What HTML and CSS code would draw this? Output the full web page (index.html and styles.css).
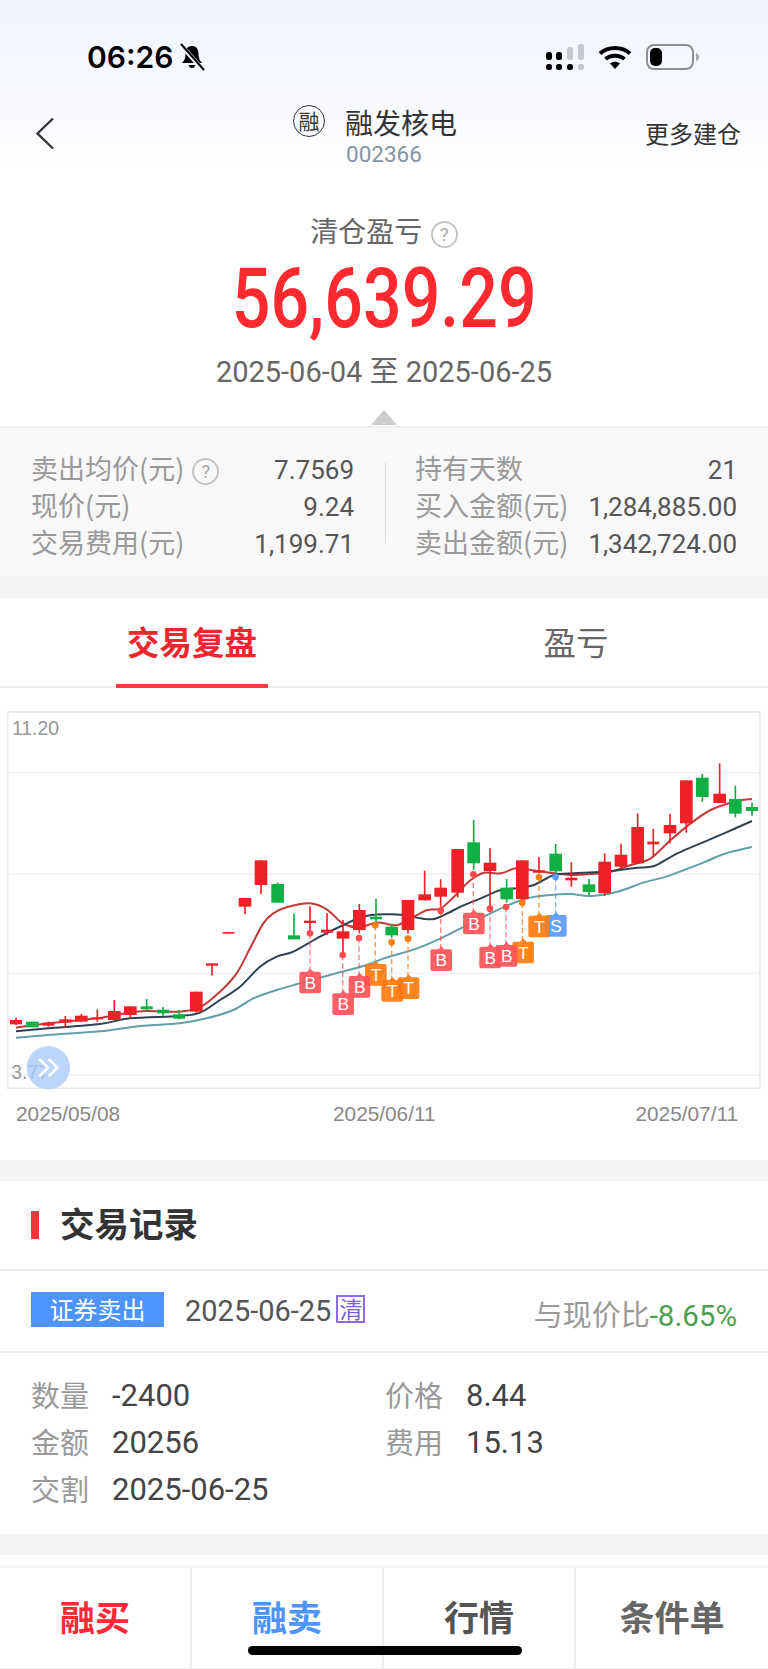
FILE: index.html
```html
<!DOCTYPE html>
<html>
<head>
  <title>融发核电</title>
  <link rel="stylesheet" href="styles.css">
</head>
<body>
  <div class="page">
    <div class="top">
      <div class="status">
        <span class="time">06:26</span>
        <svg class="bell" width="26" height="28" viewBox="0 0 26 28">
          <path d="M13 3c-4.500 0-6.500 3.500-6.500 8 0 4-1 6.500-3.500 9h20c-2.500-2.500-3.500-5-3.500-9 0-4.500-2-8-6.500-8z" fill="#000"/>
          <path d="M9.500 22h7c-.5 2-1.700 3-3.500 3s-3-1-3.500-3z" fill="#000"/>
          <path d="M2 2l22 25" stroke="#f3f7fe" stroke-width="4.500"/>
          <path d="M2 1l23 26" stroke="#000" stroke-width="2"/>
        </svg>
        <div class="status-right">
          <svg width="38" height="26" viewBox="0 0 38 26">
            <rect x="0" y="8" width="6" height="8" rx="2.500" fill="#000"/>
            <rect x="10" y="8" width="6" height="8" rx="2.500" fill="#000"/>
            <rect x="21" y="3" width="6" height="13" rx="2.500" fill="#c4c8cf"/>
            <rect x="32" y="0" width="6" height="16" rx="2.500" fill="#c4c8cf"/>
            <rect x="0" y="20" width="6" height="6" rx="2.500" fill="#000"/>
            <rect x="10" y="20" width="6" height="6" rx="2.500" fill="#000"/>
            <rect x="21" y="20" width="6" height="6" rx="2.500" fill="#000"/>
            <rect x="32" y="20" width="6" height="6" rx="2.500" fill="#c4c8cf"/>
          </svg>
          <svg width="34" height="24" viewBox="0 0 34 24">
            <path d="M2 8.500C10 1 24 1 32 8.500" fill="none" stroke="#000" stroke-width="4"/>
            <path d="M7.500 14c5-4.500 14-4.500 19 0" fill="none" stroke="#000" stroke-width="4"/>
            <path d="M12 18.500c3-2.500 7-2.500 10 0L17 24z" fill="#000"/>
          </svg>
          <svg width="54" height="26" viewBox="0 0 54 26">
            <rect x="1" y="1" width="46" height="24" rx="7" fill="none" stroke="#8b8f96" stroke-width="2"/>
            <rect x="4" y="4" width="12" height="18" rx="5" fill="#000"/>
            <path d="M50 9c2 .5 3 2 3 4s-1 3.500-3 4z" fill="#a4a8ae"/>
          </svg>
        </div>
      </div>
      <div class="nav">
        <svg class="back" width="20" height="33" viewBox="0 0 20 33">
          <path d="M18 1.500L2.500 16.500 18 31.500" fill="none" stroke="#333" stroke-width="2.400"/>
        </svg>
        <div class="stock-logo">融</div>
        <div class="stock">
          <div class="stock-name">融发核电</div>
          <div class="stock-code">002366</div>
        </div>
        <div class="more">更多建仓</div>
      </div>
    </div>

    <div class="summary">
      <div class="summary-label">清仓盈亏 <span class="help help-lg">?</span></div>
      <div class="profit"><span>56,639.29</span></div>
      <div class="period">2025-06-04 至 2025-06-25</div>
      <div class="arrow"></div>
    </div>

    <div class="stats">
      <div class="stats-col stats-left">
        <div class="stat"><span class="stat-label">卖出均价(元) <span class="help">?</span></span><span class="stat-val">7.7569</span></div>
        <div class="stat"><span class="stat-label">现价(元)</span><span class="stat-val">9.24</span></div>
        <div class="stat"><span class="stat-label">交易费用(元)</span><span class="stat-val">1,199.71</span></div>
      </div>
      <div class="stats-col stats-right">
        <div class="stat"><span class="stat-label">持有天数</span><span class="stat-val">21</span></div>
        <div class="stat"><span class="stat-label">买入金额(元)</span><span class="stat-val">1,284,885.00</span></div>
        <div class="stat"><span class="stat-label">卖出金额(元)</span><span class="stat-val">1,342,724.00</span></div>
      </div>
    </div>

    <div class="gap"></div>

    <div class="tabs">
      <div class="tab tab-on"><span>交易复盘</span></div>
      <div class="tab"><span>盈亏</span></div>
    </div>

    <div class="chart-box">
      <svg id="chart" class="chart" width="768" height="400" viewBox="0 0 2304 1200"></svg>
      <div class="dates">
        <span>2025/05/08</span>
        <span>2025/06/11</span>
        <span class="date-end">2025/07/11</span>
      </div>
    </div>

    <div class="gap"></div>

    <div class="record-head">
      <div class="record-bar"></div>
      <div class="record-title">交易记录</div>
    </div>
    <div class="record-row">
      <div class="record-tag">证券卖出</div>
      <div class="record-date">2025-06-25</div>
      <div class="record-flag">清</div>
      <div class="record-cmp">与现价比<span class="down">-8.65%</span></div>
    </div>
    <div class="detail">
      <div class="detail-item"><span class="detail-label">数量</span><span class="detail-val">-2400</span></div>
      <div class="detail-item"><span class="detail-label">价格</span><span class="detail-val">8.44</span></div>
      <div class="detail-item"><span class="detail-label">金额</span><span class="detail-val">20256</span></div>
      <div class="detail-item"><span class="detail-label">费用</span><span class="detail-val">15.13</span></div>
      <div class="detail-item"><span class="detail-label">交割</span><span class="detail-val">2025-06-25</span></div>
    </div>

    <div class="gap"></div>
    <div class="spacer"></div>

    <div class="actions">
      <div class="action act-buy">融买</div>
      <div class="action act-sell">融卖</div>
      <div class="action act-quote">行情</div>
      <div class="action act-cond">条件单</div>
    </div>
    <div class="home-bar"></div>
  </div>
  <script src="chart.js"></script>
</body>
</html>
```

FILE: styles.css
```css
* {
  box-sizing: border-box;
}

body {
  margin: 0;
  background-color: #fff;
  font-family: "Noto Sans CJK SC", sans-serif;
  color: #333;
}

.page {
  position: relative;
  width: 768px;
  height: 1669px;
  overflow: hidden;
}

.top {
  height: 190px;
  padding-top: 40px;
  background: linear-gradient(#eff4fd, #f7f9fe 50%, #fff 88%);
}

.status {
  display: flex;
  align-items: center;
  height: 34px;
  padding: 0 68px 0 87px;
}

.time {
  font-family: Inter, sans-serif;
  font-weight: 600;
  font-size: 30px;
  line-height: 34px;
  color: #000;
}

.bell {
  margin-left: 6px;
}

.status-right {
  display: flex;
  align-items: center;
  gap: 14px;
  margin-left: auto;
}

.nav {
  display: flex;
  align-items: flex-start;
  margin-top: 31px;
  padding: 0 27px 0 35px;
}

.back {
  margin-top: 12px;
}

.stock-logo {
  width: 32px;
  height: 32px;
  margin-left: 238px;
  border: 1.500px solid #333;
  border-radius: 50%;
  font-size: 21px;
  line-height: 28px;
  text-align: center;
  color: #333;
}

.stock {
  margin-left: 20px;
}

.stock-name {
  font-size: 28px;
  line-height: 34px;
  color: #333;
}

.stock-code {
  font-family: Roboto, sans-serif;
  font-size: 22.500px;
  line-height: 26px;
  margin-top: 2px;
  margin-left: 1px;
  color: #8593a3;
}

.more {
  margin-left: auto;
  margin-top: 11px;
  font-size: 24px;
  line-height: 34px;
  color: #333;
}

.summary {
  height: 236px;
  padding-top: 21px;
  text-align: center;
}

.summary-label {
  font-size: 28px;
  line-height: 38px;
  color: #666;
}

.help {
  display: inline-block;
  width: 27px;
  height: 27px;
  margin-left: 2px;
  border: 2px solid #c4c4c4;
  border-radius: 50%;
  font-family: Roboto, sans-serif;
  font-size: 19px;
  line-height: 23px;
  text-align: center;
  vertical-align: 1px;
  color: #aaa;
}

.profit {
  margin-top: 8px;
  font-family: Roboto, sans-serif;
  font-weight: 500;
  font-size: 84px;
  line-height: 84px;
  color: #ff2a30;
}

/* the number face is narrower than anything installed */
.profit span {
  display: inline-block;
  transform: scaleX(.81);
}

.period {
  margin-top: 12px;
  font-family: Roboto, "Noto Sans CJK SC", sans-serif;
  font-size: 29px;
  line-height: 38px;
  color: #666;
}

.arrow {
  width: 0;
  height: 0;
  margin: 19px auto 0;
  border-left: 13px solid transparent;
  border-right: 13px solid transparent;
  border-bottom: 15px solid #ccc;
}

.stats {
  display: flex;
  height: 151px;
  padding: 21px 31px 0;
  background-color: #f8f8f8;
  border-top: 2px solid #eee;
}

.stats-col {
  height: 111px;
}

.stats-left {
  width: 323px;
}

.stats-right {
  width: 352px;
  margin-left: 31px;
  padding-left: 30px;
  position: relative;
}

.stats-right::before {
  content: "";
  position: absolute;
  left: 0;
  top: 13px;
  height: 81px;
  width: 1px;
  background-color: #ddd;
}

.stat {
  display: flex;
  justify-content: space-between;
  height: 37px;
  font-size: 27px;
  line-height: 37px;
}

.stat-label {
  color: #999;
}

.stat-val {
  margin-top: 3px;
  font-family: Roboto, sans-serif;
  font-size: 26px;
  color: #555;
}

.gap {
  height: 21px;
  background-color: #f4f4f4;
}

.tabs {
  display: flex;
  height: 90px;
  border-bottom: 2px solid #eee;
}

.tab {
  width: 384px;
  text-align: center;
  font-size: 32.500px;
  line-height: 86px;
  color: #666;
}

.tab span {
  display: inline-block;
  height: 90px;
}

.tab-on {
  font-weight: 700;
  color: #f0262f;
}

.tab-on span {
  padding: 0 11px;
  border-bottom: 4px solid #ff3a40;
}

.chart-box {
  height: 472px;
  padding-top: 12px;
}

.chart {
  display: block;
}

.dates {
  display: grid;
  grid-template-columns: 317px 1fr 1fr;
  margin-top: 2px;
  padding: 0 30px 0 16px;
  font-family: "Liberation Sans", sans-serif;
  font-size: 20.800px;
  line-height: 24px;
  color: #888;
}

.date-end {
  text-align: right;
}

.record-head {
  display: flex;
  align-items: center;
  height: 90px;
  padding-left: 31px;
  border-bottom: 2px solid #eee;
}

.record-bar {
  width: 8px;
  height: 28px;
  background-color: #f9343c;
}

.record-title {
  margin-left: 21px;
  margin-bottom: 6px;
  font-weight: 700;
  font-size: 34.500px;
  color: #333;
}

.record-row {
  display: flex;
  align-items: center;
  height: 82px;
  padding: 0 31px 4px;
  border-bottom: 2px solid #eee;
}

.record-tag {
  width: 133px;
  height: 35px;
  background-color: #4d94ff;
  font-size: 24px;
  line-height: 33px;
  text-align: center;
  color: #fff;
}

.record-date {
  margin-left: 21px;
  margin-top: 4px;
  font-family: Roboto, sans-serif;
  font-size: 29px;
  color: #555;
}

.record-flag {
  width: 29px;
  height: 28px;
  margin-left: 5px;
  border: 2px solid #8c6ce8;
  font-size: 23px;
  line-height: 22px;
  text-align: center;
  color: #7c5ce0;
}

.record-cmp {
  margin-left: auto;
  padding-top: 8px;
  font-size: 29px;
  color: #999;
}

.down {
  font-family: Roboto, sans-serif;
  font-size: 29.500px;
  color: #4c9f50;
}

.detail {
  display: grid;
  grid-template-columns: 354px 1fr;
  grid-auto-rows: 47px;
  height: 181px;
  padding: 18px 31px 0;
}

.detail-item {
  display: flex;
  font-size: 29px;
  line-height: 47px;
}

.detail-label {
  width: 81px;
  color: #999;
}

.detail-val {
  margin-top: 1px;
  font-family: Roboto, sans-serif;
  font-size: 31px;
  color: #444;
}

.spacer {
  height: 13px;
}

.actions {
  display: flex;
  height: 101px;
  background-color: #fff;
  box-shadow: 0 -2px 4px rgba(0, 0, 0, .06);
  border-bottom: 1px solid #eee;
}

.action {
  width: 192px;
  border-right: 2px solid #eee;
  font-weight: 700;
  font-size: 35px;
  line-height: 96px;
  text-align: center;
}

.action:last-child {
  border-right: 0;
}

.act-buy {
  color: #ff2a35;
}

.act-sell {
  color: #4d94ff;
}

.act-quote {
  color: #555;
}

.act-cond {
  color: #666;
}

.home-bar {
  position: absolute;
  left: 248px;
  top: 1646px;
  width: 274px;
  height: 9px;
  border-radius: 5px;
  background-color: #000;
}
```

FILE: chart.js
```js
// x, body top, body bottom, wick top, wick bottom, colour (r / g). coordinates are 3x page px
var candles = [
  [48, 960, 973, 953, 975, "r"], [97, 965, 982, 965, 982, "g"], [145, 968, 977, 965, 980, "r"],
  [196, 958, 968, 948, 982, "r"], [244, 947, 965, 942, 966, "r"], [292, 952, 958, 928, 965, "r"],
  [343, 933, 960, 900, 962, "r"], [391, 919, 945, 919, 955, "r"], [440, 919, 928, 897, 932, "g"],
  [489, 929, 940, 921, 947, "g"], [537, 943, 956, 930, 958, "g"], [589, 875, 935, 875, 938, "r"],
  [636, 790, 797, 790, 826, "r"], [686, 696, 701, 696, 701, "r"], [735, 594, 620, 594, 643, "r"],
  [783, 481, 555, 481, 582, "r"], [833, 552, 608, 548, 608, "g"], [882, 706, 718, 641, 718, "g"],
  [930, 662, 669, 619, 690, "r"], [981, 689, 698, 640, 705, "r"], [1029, 694, 716, 660, 760, "r"],
  [1078, 630, 690, 612, 700, "r"], [1128, 650, 658, 596, 665, "g"], [1175, 680, 706, 672, 715, "g"],
  [1224, 600, 690, 600, 700, "r"], [1274, 583, 601, 512, 601, "r"], [1322, 563, 590, 538, 620, "r"],
  [1373, 447, 578, 447, 592, "r"], [1421, 427, 490, 360, 510, "g"], [1470, 488, 513, 445, 620, "r"],
  [1520, 563, 598, 537, 608, "g"], [1567, 481, 597, 481, 600, "r"], [1617, 511, 518, 471, 520, "r"],
  [1667, 461, 514, 432, 520, "g"], [1714, 533, 541, 487, 560, "r"], [1767, 553, 576, 537, 586, "g"],
  [1814, 485, 580, 460, 588, "r"], [1863, 464, 500, 431, 506, "r"], [1913, 381, 490, 340, 492, "r"],
  [1960, 425, 433, 387, 470, "r"], [2010, 375, 400, 341, 430, "r"], [2059, 241, 370, 241, 398, "r"],
  [2107, 233, 291, 222, 305, "g"], [2159, 281, 309, 190, 309, "r"], [2206, 297, 341, 257, 352, "g"],
  [2256, 321, 333, 308, 347, "g"]
];

var lines = [
  ["#c43a37", [[48,983],[145,970],[292,955],[390,937],[440,933],[537,935],[600,922],[660,875],[710,820],[750,745],[790,670],[820,640],[860,622],[925,610],[970,622],[1000,645],[1030,672],[1078,682],[1125,668],[1152,670],[1192,675],[1242,650],[1282,630],[1322,625],[1362,590],[1412,540],[1452,518],[1502,520],[1547,505],[1592,510],[1662,520],[1712,525],[1772,522],[1832,515],[1892,495],[1952,475],[2012,420],[2072,370],[2132,330],[2202,305],[2256,297]]],
  ["#2f4252", [[48,994],[145,985],[300,972],[390,955],[537,948],[600,938],[660,900],[720,860],[780,800],[830,770],[880,755],[960,710],[1030,675],[1090,650],[1152,643],[1212,645],[1262,655],[1302,657],[1342,640],[1382,620],[1442,595],[1502,570],[1552,565],[1602,555],[1662,525],[1722,520],[1782,517],[1842,512],[1912,503],[1962,498],[2032,460],[2102,430],[2172,400],[2256,363]]],
  ["#639fa6", [[48,1013],[145,1005],[300,994],[420,978],[540,970],[620,955],[700,930],[760,895],[830,870],[900,850],[1000,822],[1100,795],[1152,775],[1252,745],[1322,715],[1392,680],[1462,645],[1522,617],[1582,595],[1652,585],[1712,582],[1772,588],[1852,575],[1932,547],[1992,532],[2052,510],[2112,487],[2172,462],[2256,441]]]
];

// x, dot y, tag top, tag left, label. later entries are painted on top
var marks = [
  [1667, 531, 645, 1635, "S"], [1617, 532, 647, 1585, "T"], [1567, 608, 725, 1537, "T"],
  [1518, 621, 735, 1487, "B"], [1470, 626, 740, 1438, "B"], [1420, 523, 638, 1389, "B"],
  [1322, 632, 748, 1291, "B"], [1224, 716, 832, 1193, "T"], [1175, 727, 840, 1144, "T"],
  [1126, 676, 792, 1095, "T"], [1077, 714, 828, 1046, "B"], [1028, 765, 880, 997, "B"],
  [930, 700, 815, 898, "B"]
];

var markColors = { B: "#ff5359", T: "#ff7a10", S: "#5b9bff" };
var markDots = { B: "#ff4a50", T: "#ff7e14", S: "#5b9bff" };

// catmull-rom through the points
function smooth(p) {
  var d = "M" + p[0][0] + " " + p[0][1];
  for (var i = 0; i < p.length - 1; i++) {
    var a = p[Math.max(i - 1, 0)];
    var b = p[i];
    var c = p[i + 1];
    var e = p[Math.min(i + 2, p.length - 1)];
    var c1x = b[0] + (c[0] - a[0]) / 6;
    var c1y = b[1] + (c[1] - a[1]) / 6;
    var c2x = c[0] - (e[0] - b[0]) / 6;
    var c2y = c[1] - (e[1] - b[1]) / 6;
    d += "C" + c1x + " " + c1y + " " + c2x + " " + c2y + " " + c[0] + " " + c[1];
  }
  return d;
}

var html = "";

html += '<rect x="23" y="36" width="2257" height="1129" fill="none" stroke="#e9e9ee" stroke-width="5"/>';
[218, 522, 820, 1125].forEach(function (y) {
  html += '<path d="M24 ' + y + 'H2278" stroke="#f0f0f6" stroke-width="4"/>';
});

html += '<text x="36" y="106" class="axis" font-family="Liberation Sans" font-size="58" fill="#999">11.20</text>';
html += '<text x="34" y="1138" class="axis" font-family="Liberation Sans" font-size="58" fill="#999">3.77</text>';

lines.forEach(function (l) {
  html += '<path d="' + smooth(l[1]) + '" fill="none" stroke="' + l[0] + '" stroke-width="6"/>';
});

candles.forEach(function (c) {
  var col = c[5] == "r" ? "#ee2128" : "#10b045";
  var w = c[2] - c[1] > 14 ? 38 : 36;
  html += '<path d="M' + c[0] + " " + c[3] + "V" + c[4] + '" stroke="' + col + '" stroke-width="5"/>';
  html += '<rect x="' + (c[0] - w / 2) + '" y="' + c[1] + '" width="' + w + '" height="' + (c[2] - c[1]) + '" fill="' + col + '"/>';
});

marks.forEach(function (m) {
  var col = markColors[m[4]];
  var dot = markDots[m[4]];
  var mid = m[3] + 33;
  html += '<path d="M' + m[0] + " " + m[1] + "V" + m[2] + '" stroke="' + col + '" stroke-width="4" stroke-dasharray="16 9" opacity=".75"/>';
  html += '<circle cx="' + m[0] + '" cy="' + m[1] + '" r="10" fill="' + dot + '"/>';
  html += '<g opacity=".92">';
  html += '<rect x="' + m[3] + '" y="' + m[2] + '" width="65" height="65" rx="6" fill="' + col + '"/>';
  html += '<path d="M' + (mid - 10) + " " + (m[2] + 1) + "L" + mid + " " + (m[2] - 9) + "L" + (mid + 10) + " " + (m[2] + 1) + 'z" fill="' + col + '"/>';
  html += "</g>";
  html += '<text x="' + mid + '" y="' + (m[2] + 51) + '" text-anchor="middle" font-family="Liberation Sans" font-size="52" fill="#fff">' + m[4] + "</text>";
});

html += '<circle cx="145" cy="1103" r="65" fill="#a9cbfb" opacity=".78"/>';
html += '<path d="M118 1077l26 26-26 26M146 1077l26 26-26 26" fill="none" stroke="#fff" stroke-width="8"/>';

document.getElementById("chart").innerHTML = html;
```
